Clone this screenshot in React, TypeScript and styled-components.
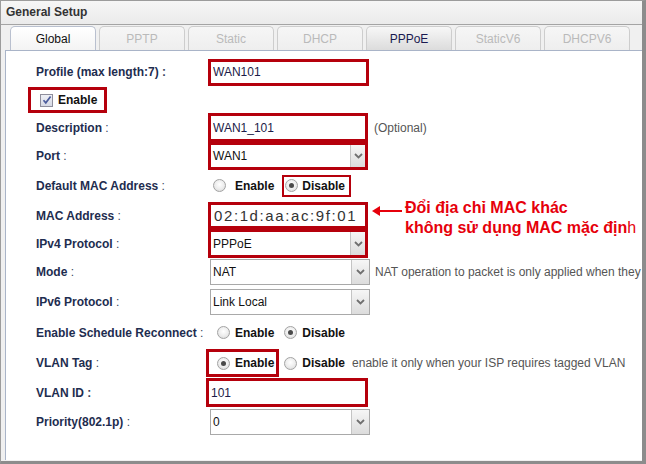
import React from 'react'
import styled, { createGlobalStyle } from 'styled-components'

const GlobalStyle = createGlobalStyle`
  html, body { margin:0; padding:0; background:#fff; }
  body { font-family:"Liberation Sans", Arial, sans-serif; font-size:12px; }
  * { box-sizing:border-box; }
`

const Panel = styled.div`
  width:646px;
  height:464px;
  display:flex;
  flex-direction:column;
  background:#efefef;
  border-left:1px solid #9c9c9c;
  border-top:1px solid #9c9c9c;
  border-right:4px solid #8c8c8c;
  border-bottom:3px solid #8c8c8c;
  overflow:hidden;
`
const Header = styled.div`
  height:24px;
  line-height:23px;
  padding-left:5px;
  font-weight:700;
  font-size:12px;
  color:#333;
  background:linear-gradient(#f6f6f6,#ebebeb);
  border-bottom:1px solid #a4a4a4;
`
const TabBar = styled.div`
  height:25px;
  display:flex;
  align-items:flex-end;
  gap:3px;
  padding-left:9px;
  background:#f0f0f0;
`
const Tab = styled.div<{ $variant: 'active' | 'current' | 'off' }>`
  width:86px;
  height:24px;
  display:flex;
  align-items:center;
  justify-content:center;
  font-size:12px;
  border:1px solid ${p => (p.$variant === 'active' ? '#b9c0cf' : '#cdcdcd')};
  border-bottom:none;
  border-radius:5px 5px 0 0;
  color:${p => (p.$variant === 'active' ? '#111' : p.$variant === 'current' ? '#1a1a50' : '#bababa')};
  background:${p =>
    p.$variant === 'active'
      ? 'linear-gradient(#ffffff,#f4f4f4)'
      : p.$variant === 'current'
      ? 'linear-gradient(#f7f7f7,#dcdcdc)'
      : 'linear-gradient(#f6f6f6,#eeeeee)'};
`
const Body = styled.div`
  flex:1;
  display:flex;
  padding-left:4px;
  padding-bottom:1px;
  background:#f0f0f0;
`
const Content = styled.div`
  flex:1;
  background:#fff;
  border-left:1px solid #a9b4c8;
  border-top:1px solid #a9b4c8;
  overflow:hidden;
`
const Form = styled.div`
  display:flex;
  flex-direction:column;
  padding:7px 0 0 30px;
`
const Row = styled.div<{ $h: number }>`
  position:relative;
  display:flex;
  align-items:center;
  height:${p => p.$h}px;
  white-space:nowrap;
`
const Label = styled.div`
  width:172px;
  flex:none;
  font-weight:700;
  color:#1e2d4f;
`
const Colon = styled.span<{ $bold?: boolean }>`
  font-weight:${p => (p.$bold ? 700 : 400)};
  color:#3a4660;
`
const Highlight = styled.div<{ $w?: number; $h: number; $t?: number; $ml?: number; $pl?: number; $pr?: number }>`
  display:flex;
  align-items:center;
  flex:none;
  width:${p => (p.$w ? `${p.$w}px` : 'auto')};
  height:${p => p.$h}px;
  margin-left:${p => p.$ml ?? 0}px;
  padding-left:${p => p.$pl ?? 0}px;
  padding-right:${p => p.$pr ?? 0}px;
  border:${p => p.$t ?? 3}px solid #b5000c;
  background:#fff;
`
const TextInput = styled.input<{ $big?: boolean }>`
  width:100%;
  height:100%;
  border:none;
  outline:none;
  background:transparent;
  padding:0 0 0 ${p => (p.$big ? 3 : 2)}px;
  font-family:"Liberation Sans", Arial, sans-serif;
  font-size:${p => (p.$big ? 15 : 12)}px;
  letter-spacing:${p => (p.$big ? 1.6 : 0)}px;
  color:${p => (p.$big ? '#333' : '#1c1c48')};
`
const SelectBox = styled.div<{ $bare?: boolean }>`
  display:flex;
  flex:none;
  width:${p => (p.$bare ? '100%' : '160px')};
  height:${p => (p.$bare ? '100%' : '26px')};
  margin-left:${p => (p.$bare ? 0 : 2)}px;
  border:${p => (p.$bare ? 'none' : '1px solid #a9a9a9')};
  background:#fff;
`
const SelectValue = styled.div`
  flex:1;
  display:flex;
  align-items:center;
  padding-left:2px;
  color:#111;
`
const ArrowButton = styled.div<{ $bare?: boolean }>`
  width:${p => (p.$bare ? 15 : 18)}px;
  display:flex;
  align-items:center;
  justify-content:center;
  border-left:1px solid #c4c4c4;
  background:linear-gradient(#f6f6f6,#dcdcdc);
`
const Hint = styled.span<{ $ml: number }>`
  margin-left:${p => p.$ml}px;
  color:#555;
`
const Option = styled.label<{ $pl?: number; $gap?: number; $ml?: number }>`
  display:flex;
  align-items:center;
  gap:${p => p.$gap ?? 5}px;
  padding-left:${p => p.$pl ?? 0}px;
  margin-left:${p => p.$ml ?? 0}px;
  font-weight:700;
  color:#111;
`
const RadioDot = styled.span<{ $on?: boolean }>`
  width:13px;
  height:13px;
  flex:none;
  border-radius:50%;
  border:1px solid #a3a3a3;
  background:radial-gradient(circle at 50% 40%, #fff 0%, #ececec 55%, #d2d2d2 100%);
  display:inline-flex;
  align-items:center;
  justify-content:center;
  &::after{
    content:'';
    width:5px;
    height:5px;
    border-radius:50%;
    background:${p => (p.$on ? '#4a4a4a' : 'transparent')};
  }
`
const CheckBox = styled.span`
  width:13px;
  height:13px;
  flex:none;
  border:1px solid #8e8e9c;
  background:linear-gradient(#eef0f6,#d6d9e4);
  display:inline-flex;
  align-items:center;
  justify-content:center;
`
const Annotation = styled.div`
  position:absolute;
  left:335px;
  top:-3px;
  display:flex;
  align-items:flex-start;
`
const NoteText = styled.div`
  margin-left:2px;
  font-size:16px;
  line-height:20px;
  font-weight:700;
  color:#e6000b;
`
const Thin = styled.span`
  font-weight:400;
`

const Chevron = () => (
  <svg width="9" height="6" viewBox="0 0 9 6">
    <path d="M1 1l3.5 3.5L8 1" stroke="#707070" strokeWidth="1.8" fill="none" />
  </svg>
)

const Select = ({ value, bare }: { value: string; bare?: boolean }) => (
  <SelectBox $bare={bare}>
    <SelectValue>{value}</SelectValue>
    <ArrowButton $bare={bare}>
      <Chevron />
    </ArrowButton>
  </SelectBox>
)

const FieldLabel = ({ text, bold }: { text: string; bold?: boolean }) => (
  <Label>
    {text} <Colon $bold={bold}>:</Colon>
  </Label>
)

const tabs: { title: string; variant: 'active' | 'current' | 'off' }[] = [
  { title: 'Global', variant: 'active' },
  { title: 'PPTP', variant: 'off' },
  { title: 'Static', variant: 'off' },
  { title: 'DHCP', variant: 'off' },
  { title: 'PPPoE', variant: 'current' },
  { title: 'StaticV6', variant: 'off' },
  { title: 'DHCPV6', variant: 'off' },
]

const App = () => {
  return (
    <>
      <GlobalStyle />
      <Panel>
        <Header>General Setup</Header>
        <TabBar>
          {tabs.map(t => (
            <Tab key={t.title} $variant={t.variant}>
              {t.title}
            </Tab>
          ))}
        </TabBar>
        <Body>
          <Content>
            <Form>
              <Row $h={28}>
                <FieldLabel text="Profile (max length:7)" bold />
                <Highlight $w={161} $h={27}>
                  <TextInput readOnly value="WAN101" />
                </Highlight>
              </Row>

              <Row $h={28}>
                <Highlight $h={26} $ml={-8} $pl={9} $pr={7}>
                  <Option $gap={5}>
                    <CheckBox>
                      <svg width="10" height="10" viewBox="0 0 10 10">
                        <path d="M1.5 5.2l2.3 2.6L8.6 1.6" stroke="#4b5c9c" strokeWidth="1.7" fill="none" />
                      </svg>
                    </CheckBox>
                    Enable
                  </Option>
                </Highlight>
              </Row>

              <Row $h={27}>
                <FieldLabel text="Description" />
                <Highlight $w={160} $h={29}>
                  <TextInput readOnly value="WAN1_101" />
                </Highlight>
                <Hint $ml={6}>(Optional)</Hint>
              </Row>

              <Row $h={29}>
                <FieldLabel text="Port" />
                <Highlight $w={160} $h={28}>
                  <Select value="WAN1" bare />
                </Highlight>
              </Row>

              <Row $h={31}>
                <FieldLabel text="Default MAC Address" />
                <Option $pl={5} $gap={9}>
                  <RadioDot />
                  Enable
                </Option>
                <Highlight $h={22} $t={2} $ml={8} $pl={1} $pr={4}>
                  <Option $gap={4}>
                    <RadioDot $on />
                    Disable
                  </Option>
                </Highlight>
              </Row>

              <Row $h={29}>
                <FieldLabel text="MAC Address" />
                <Highlight $w={160} $h={27}>
                  <TextInput $big readOnly value="02:1d:aa:ac:9f:01" />
                </Highlight>
                <Annotation>
                  <svg width="32" height="20" viewBox="0 0 32 20">
                    <path d="M31 13H6" stroke="#e6000b" strokeWidth="2" />
                    <path d="M1 13l8-5v10z" fill="#e6000b" />
                  </svg>
                  <NoteText>
                    Đổi địa chỉ MAC khác
                    <br />
                    không sử dụng MAC mặc địn<Thin>h</Thin>
                  </NoteText>
                </Annotation>
              </Row>

              <Row $h={27}>
                <FieldLabel text="IPv4 Protocol" />
                <Highlight $w={160} $h={29}>
                  <Select value="PPPoE" bare />
                </Highlight>
              </Row>

              <Row $h={30}>
                <FieldLabel text="Mode" />
                <Select value="NAT" />
                <Hint $ml={5}>NAT operation to packet is only applied when they</Hint>
              </Row>

              <Row $h={30}>
                <FieldLabel text="IPv6 Protocol" />
                <Select value="Link Local" />
              </Row>

              <Row $h={31}>
                <FieldLabel text="Enable Schedule Reconnect" />
                <Option $pl={9}>
                  <RadioDot />
                  Enable
                </Option>
                <Option $ml={10}>
                  <RadioDot $on />
                  Disable
                </Option>
              </Row>

              <Row $h={30}>
                <FieldLabel text="VLAN Tag" />
                <Highlight $h={28} $ml={-2} $pl={8} $pr={2}>
                  <Option>
                    <RadioDot $on />
                    Enable
                  </Option>
                </Highlight>
                <Option $ml={5}>
                  <RadioDot />
                  Disable
                </Option>
                <Hint $ml={7}>enable it only when your ISP requires tagged VLAN</Hint>
              </Row>

              <Row $h={29}>
                <FieldLabel text="VLAN ID" bold />
                <Highlight $w={162} $h={29} $ml={-2}>
                  <TextInput readOnly value="101" />
                </Highlight>
              </Row>

              <Row $h={29}>
                <FieldLabel text="Priority(802.1p)" />
                <Select value="0" />
              </Row>
            </Form>
          </Content>
        </Body>
      </Panel>
    </>
  )
}

export default App
